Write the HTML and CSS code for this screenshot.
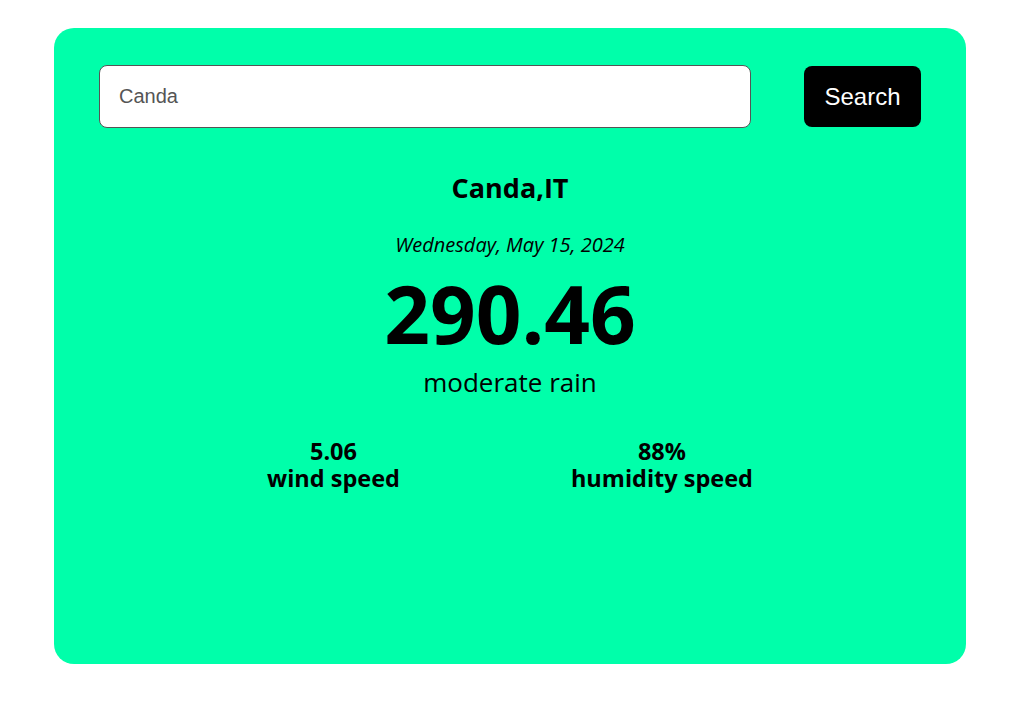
FILE: index.html
```html
<!DOCTYPE html>
<html>
<head>
<meta charset="utf-8">
<link rel="stylesheet" href="styles.css">
</head>
<body>
<div class="card">
  <div class="search-row">
    <input class="search-input" type="text" value="Canda">
    <button class="search-btn">Search</button>
  </div>
  <div class="weather">
    <h2 class="city">Canda,IT</h2>
    <p class="date">Wednesday, May 15, 2024</p>
    <div class="temp">290.46</div>
    <div class="desc">moderate rain</div>
    <div class="stats">
      <div class="stat"><div>5.06</div><div>wind speed</div></div>
      <div class="stat"><div>88%</div><div>humidity speed</div></div>
    </div>
  </div>
</div>
</body>
</html>
```
FILE: styles.css
```css
html, body { margin: 0; padding: 0; background: #fff; }
body { padding: 28px 63px 43px 54px; }
.card {
  width: 912px;
  height: 636px;
  box-sizing: border-box;
  background: #00ffaa;
  border-radius: 20px;
  padding: 37px 45px 0 45px;
  font-family: "Open Sans", "Noto Sans", sans-serif;
  color: #000;
}
.search-row {
  display: flex;
  align-items: center;
  justify-content: space-between;
}
.search-input {
  width: 652px;
  height: 63px;
  box-sizing: border-box;
  border: 1px solid #555;
  border-radius: 8px;
  padding: 0 19px;
  font-family: "Liberation Sans", Arial, sans-serif;
  font-size: 20px;
  color: #555;
  background: #fff;
  outline: none;
}
.search-btn {
  width: 117px;
  height: 61px;
  background: #000;
  color: #fff;
  border: none;
  border-radius: 8px;
  font-family: "Liberation Sans", Arial, sans-serif;
  font-size: 24px;
  padding: 0;
}
.weather { text-align: center; }
.city {
  margin: 42px 0 0;
  font-size: 27px;
  font-weight: 700;
  line-height: 36px;
}
.date {
  margin: 26px 0 0;
  font-size: 20px;
  font-style: italic;
  line-height: 26px;
}
.temp {
  margin: 15px 0 0;
  font-size: 80px;
  font-weight: 700;
  line-height: 80px;
}
.desc {
  margin: 12px 0 0;
  font-size: 26px;
  line-height: 34px;
}
.stats {
  display: flex;
  justify-content: center;
  gap: 171px;
  margin-top: 39px;
}
.stat {
  font-size: 23.5px;
  font-weight: 700;
  line-height: 27px;
}
```
